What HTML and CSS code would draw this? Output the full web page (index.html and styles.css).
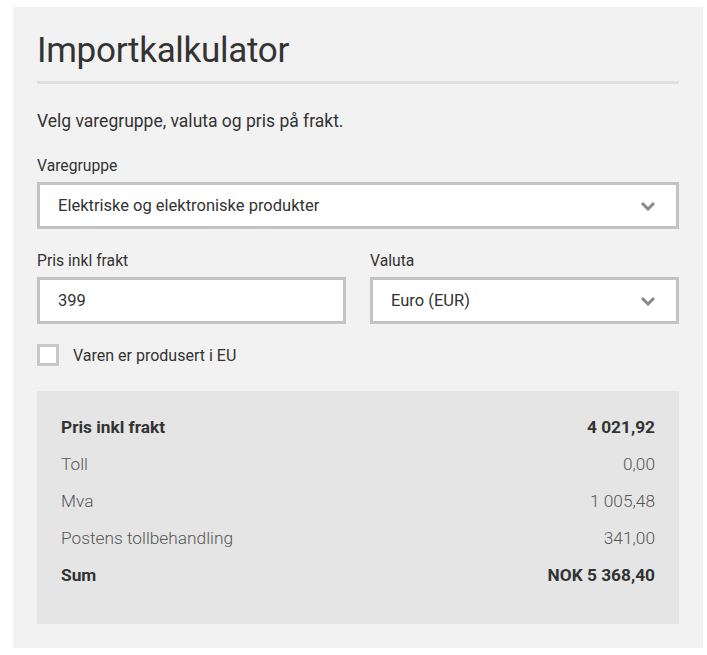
FILE: index.html
```html
<!DOCTYPE html>
<html lang="no">
<head>
<meta charset="utf-8">
<title>Importkalkulator</title>
<link rel="stylesheet" href="styles.css">
</head>
<body>
<div class="panel">
  <h1 class="title">Importkalkulator</h1>
  <p class="intro">Velg varegruppe, valuta og pris på frakt.</p>

  <div class="field">
    <label class="label">Varegruppe</label>
    <div class="box select">
      <span>Elektriske og elektroniske produkter</span>
      <svg class="chev" width="16" height="10" viewBox="0 0 16 10"><path d="M2 2 L8 8 L14 2" fill="none" stroke="#8a8a8a" stroke-width="3"/></svg>
    </div>
  </div>

  <div class="row2">
    <div class="field">
      <label class="label">Pris inkl frakt</label>
      <div class="box"><span>399</span></div>
    </div>
    <div class="field">
      <label class="label">Valuta</label>
      <div class="box select">
        <span>Euro (EUR)</span>
        <svg class="chev" width="16" height="10" viewBox="0 0 16 10"><path d="M2 2 L8 8 L14 2" fill="none" stroke="#8a8a8a" stroke-width="3"/></svg>
      </div>
    </div>
  </div>

  <div class="check">
    <span class="checkbox"></span>
    <span class="check-label">Varen er produsert i EU</span>
  </div>

  <div class="result">
    <div class="line strong"><span>Pris inkl frakt</span><span>4 021,92</span></div>
    <div class="line"><span>Toll</span><span>0,00</span></div>
    <div class="line"><span>Mva</span><span>1 005,48</span></div>
    <div class="line"><span>Postens tollbehandling</span><span>341,00</span></div>
    <div class="line strong"><span>Sum</span><span>NOK 5 368,40</span></div>
  </div>
</div>
</body>
</html>
```

FILE: styles.css
```css
* { box-sizing: border-box; }
html, body { background: #fff; }
body {
  margin: 0;
  padding: 7px 4px 0 13px;
  font-family: Roboto, "Liberation Sans", sans-serif;
  color: #333;
}
.panel {
  width: 690px;
  height: 641px;
  background: #f2f2f2;
  padding: 24px 24px 0 24px;
}
.title {
  margin: 0;
  font-size: 35px;
  font-weight: 400;
  line-height: 40px;
  color: #333;
  padding-bottom: 10px;
  border-bottom: 3px solid #e0e0e0;
  letter-spacing: -0.3px;
}
.intro {
  margin: 25px 0 0;
  font-size: 17.5px;
  line-height: 24px;
  color: #333;
}
.field { display: flex; flex-direction: column; }
.label {
  font-size: 15.7px;
  line-height: 20px;
  margin-top: 23px;
  margin-bottom: 6px;
  color: #333;
}
.box {
  height: 47px;
  border: 3px solid #c3c3c3;
  background: #fff;
  display: flex;
  align-items: center;
  justify-content: space-between;
  padding: 0 20px 0 18px;
  font-size: 16.5px;
  color: #333;
}
.chev { display: block; }
.row2 {
  display: grid;
  grid-template-columns: 1fr 1fr;
  gap: 24px;
  margin-top: 6px;
}
.row2 .label { margin-top: 16px; }
.check {
  display: flex;
  align-items: center;
  gap: 14px;
  margin-top: 20px;
}
.checkbox {
  width: 22px;
  height: 22px;
  border: 3px solid #c8c8c8;
  background: #fff;
}
.check-label { font-size: 16px; color: #333; }
.result {
  margin-top: 25px;
  background: #e5e5e5;
  height: 233px;
  padding: 17px 24px 0 24px;
}
.line {
  display: flex;
  justify-content: space-between;
  height: 37px;
  align-items: center;
  font-size: 17.3px;
  font-weight: 300;
  color: #555;
}
.line.strong { font-weight: 700; color: #333; }
```
